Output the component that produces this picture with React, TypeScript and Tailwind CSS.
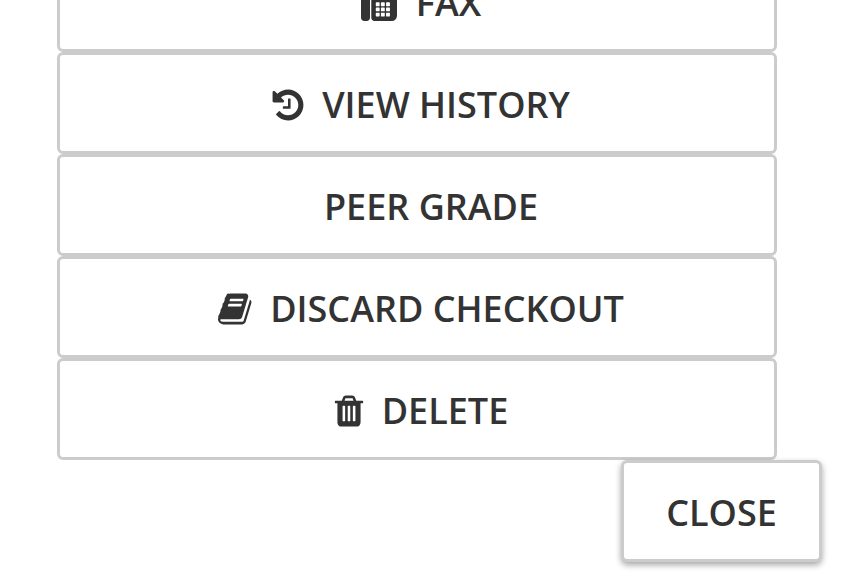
import type { ReactNode } from "react";

const FAX =
  "M288 384q66 0 113 47t47 113v1088q0 66-47 113t-113 47h-128q-66 0-113-47t-47-113v-1088q0-66 47-113t113-47h128zm1376 163q58 34 93 93t35 128v768q0 106-75 181t-181 75h-864q-66 0-113-47t-47-113v-1536q0-40 28-68t68-28h672q40 0 88 20t76 48l152 152q28 28 48 76t20 88v163zm-736 989v-128q0-14-9-23t-23-9h-128q-14 0-23 9t-9 23v128q0 14 9 23t23 9h128q14 0 23-9t9-23zm0-256v-128q0-14-9-23t-23-9h-128q-14 0-23 9t-9 23v128q0 14 9 23t23 9h128q14 0 23-9t9-23zm0-256v-128q0-14-9-23t-23-9h-128q-14 0-23 9t-9 23v128q0 14 9 23t23 9h128q14 0 23-9t9-23zm256 512v-128q0-14-9-23t-23-9h-128q-14 0-23 9t-9 23v128q0 14 9 23t23 9h128q14 0 23-9t9-23zm0-256v-128q0-14-9-23t-23-9h-128q-14 0-23 9t-9 23v128q0 14 9 23t23 9h128q14 0 23-9t9-23zm0-256v-128q0-14-9-23t-23-9h-128q-14 0-23 9t-9 23v128q0 14 9 23t23 9h128q14 0 23-9t9-23zm256 512v-128q0-14-9-23t-23-9h-128q-14 0-23 9t-9 23v128q0 14 9 23t23 9h128q14 0 23-9t9-23zm0-256v-128q0-14-9-23t-23-9h-128q-14 0-23 9t-9 23v128q0 14 9 23t23 9h128q14 0 23-9t9-23zm0-256v-128q0-14-9-23t-23-9h-128q-14 0-23 9t-9 23v128q0 14 9 23t23 9h128q14 0 23-9t9-23z";
const HISTORY =
  "M1664 896q0 156-61 298t-164 245-245 164-298 61q-172 0-327-72.5t-264-204.5q-7-10-6.5-22.5t8.5-20.5l137-138q10-9 25-9 16 2 23 12 73 95 179 147t225 52q104 0 198.5-40.5t163.5-109.5 109.5-163.5 40.5-198.5-40.5-198.5-109.5-163.5-163.5-109.5-198.5-40.5q-98 0-188 35.5t-160 101.5l137 138q31 30 14 69-17 40-59 40h-448q-26 0-45-19t-19-45v-448q0-42 40-59 39-17 69 14l130 129q107-101 244.5-156.5t284.5-55.5q156 0 298 61t245 164 164 245 61 298zm-640-288v448q0 14-9 23t-23 9h-320q-14 0-23-9t-9-23v-64q0-14 9-23t23-9h224v-352q0-14 9-23t23-9h64q14 0 23 9t9 23z";
const BOOK =
  "M1639 478q40 57 18 129l-275 906q-19 64-76.5 107.5t-122.5 43.5h-923q-77 0-148.5-53.5t-99.5-131.5q-24-67-2-127 0-4 3-27t4-37q1-8-3-21.5t-3-19.5q2-11 8-21t16.5-23.5 16.5-23.5q23-38 45-91.5t30-91.5q3-10 .5-30t-.5-28q3-11 17-28t17-23q21-36 42-92t25-90q1-9-2.5-32t.5-28q4-13 22-30.5t22-22.5q19-26 42.5-84.5t27.5-96.5q1-8-3-25.5t-2-26.5q2-8 9-18t18-23 17-21q8-12 16.5-30.5t15-35 16-36 19.5-32 26.5-23.5 36-11.5 47.5 5.5l-1 3q38-9 51-9h761q74 0 114 56t18 130l-274 906q-36 119-71.5 153.5t-128.5 34.5h-869q-27 0-38 15-11 16-1 43 24 70 144 70h923q29 0 56-15.5t35-41.5l300-987q7-22 5-57 38 15 59 43zm-1064 2q-4 13 2 22.5t20 9.5h608q13 0 25.5-9.5t16.5-22.5l21-64q4-13-2-22.5t-20-9.5h-608q-13 0-25.5 9.5t-16.5 22.5zm-83 256q-4 13 2 22.5t20 9.5h608q13 0 25.5-9.5t16.5-22.5l21-64q4-13-2-22.5t-20-9.5h-608q-13 0-25.5 9.5t-16.5 22.5z";
const TRASH =
  "M704 1376v-704q0-14-9-23t-23-9h-64q-14 0-23 9t-9 23v704q0 14 9 23t23 9h64q14 0 23-9t9-23zm256 0v-704q0-14-9-23t-23-9h-64q-14 0-23 9t-9 23v704q0 14 9 23t23 9h64q14 0 23-9t9-23zm256 0v-704q0-14-9-23t-23-9h-64q-14 0-23 9t-9 23v704q0 14 9 23t23 9h64q14 0 23-9t9-23zm-544-992h448l-48-117q-7-9-17-11h-317q-10 2-17 11zm928 32v64q0 14-9 23t-23 9h-96v948q0 83-47 143.5t-113 60.5h-832q-66 0-113-58.5t-47-141.5v-952h-96q-14 0-23-9t-9-23v-64q0-14 9-23t23-9h309l70-167q15-37 54-63t79-26h320q40 0 79 26t54 63l70 167h309q14 0 23 9t9 23z";

function Glyph({ d, cls }: { d: string; cls: string }) {
  return (
    <svg viewBox="0 0 1792 1792" className={`h-[36px] w-[36px] shrink-0 fill-[#333333] ${cls}`}>
      <path d={d} />
    </svg>
  );
}

function Row({ icon, label, cls = "" }: { icon?: ReactNode; label: string; cls?: string }) {
  return (
    <button className={`flex h-[102px] w-[720px] shrink-0 items-center justify-center rounded-[6px] border-[3px] border-[#cccccc] bg-white pt-[4px] text-[36px] font-[550] text-[#333333] ${cls}`}>
      {icon}
      <span>{label}</span>
    </button>
  );
}

export default function App() {
  return (
    <div className="relative h-[582px] w-[846px] overflow-hidden bg-white font-['Open_Sans',sans-serif]">
      <div className="ml-[57px] mt-[-50px] flex flex-col">
        <Row label="FAX" cls="pl-[8px]" icon={<Glyph d={FAX} cls="mr-[19px]" />} />
        <Row label="VIEW HISTORY" cls="pl-[6px]" icon={<Glyph d={HISTORY} cls="mr-[16px]" />} />
        <Row label="PEER GRADE" cls="pl-[28px]" />
        <Row label="DISCARD CHECKOUT" cls="pl-[8px]" icon={<Glyph d={BOOK} cls="mr-[16px]" />} />
        <Row label="DELETE" cls="pl-[5px]" icon={<Glyph d={TRASH} cls="mr-[15px]" />} />
      </div>
      <div className="flex justify-end pr-[24px]">
        <button className="h-[102px] w-[201px] rounded-[6px] border-[3px] border-[#cccccc] bg-white pt-[4px] text-[36px] font-[550] text-[#333333] shadow-[0_3px_6px_rgba(0,0,0,0.35)]">CLOSE</button>
      </div>
    </div>
  );
}
